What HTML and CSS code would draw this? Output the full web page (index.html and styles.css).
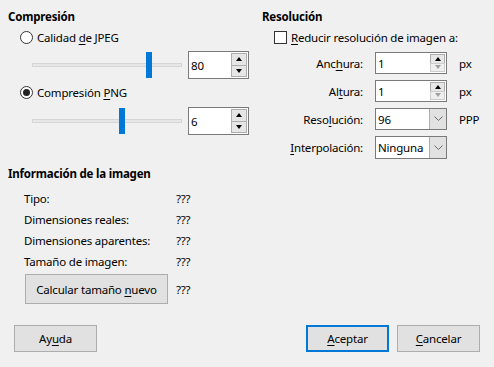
FILE: index.html
```html
<!DOCTYPE html>
<html lang="es">
<head>
  <meta charset="UTF-8">
  <title>Comprimir imagen</title>
  <link rel="stylesheet" href="styles.css">
</head>
<body>
  <div class="dialog">
    <div class="top">
      <section class="col-left">
        <h3 class="heading">Compresión</h3>
        <label class="option opt-jpeg"><span class="radio"></span><span>Calidad <u>d</u>e JPEG</span></label>
        <div class="slider-row row-jpeg">
          <div class="slider">
            <div class="track"></div>
            <div class="thumb" style="left: 114px"></div>
          </div>
          <div class="spin">
            <span class="value">80</span>
            <span class="spin-btns"><span class="sbtn up"></span><span class="sbtn down"></span></span>
          </div>
        </div>
        <label class="option opt-png"><span class="radio checked"></span><span>Compresión <u>P</u>NG</span></label>
        <div class="slider-row row-png">
          <div class="slider">
            <div class="track"></div>
            <div class="thumb" style="left: 87px"></div>
          </div>
          <div class="spin">
            <span class="value">6</span>
            <span class="spin-btns"><span class="sbtn up"></span><span class="sbtn down"></span></span>
          </div>
        </div>
      </section>

      <section class="col-right">
        <h3 class="heading">Resolución</h3>
        <label class="option opt-reduce"><span class="check"></span><span><u>R</u>educir resolución de imagen a:</span></label>
        <div class="fields">
          <div class="field-row">
            <span class="flabel">Anc<u>h</u>ura:</span>
            <div class="spin small">
              <span class="value">1</span>
              <span class="spin-btns"><span class="sbtn up"></span><span class="sbtn down off"></span></span>
            </div>
            <span class="unit">px</span>
          </div>
          <div class="field-row">
            <span class="flabel">Al<u>t</u>ura:</span>
            <div class="spin small">
              <span class="value">1</span>
              <span class="spin-btns"><span class="sbtn up"></span><span class="sbtn down off"></span></span>
            </div>
            <span class="unit">px</span>
          </div>
          <div class="field-row">
            <span class="flabel">Reso<u>l</u>ución:</span>
            <div class="combo">
              <span class="value">96</span>
              <span class="drop"><svg width="9" height="6" viewBox="0 0 9 6"><polyline points="0.5,0.5 4.5,4.5 8.5,0.5" fill="none" stroke="#6d6d6d" stroke-width="1"/></svg></span>
            </div>
            <span class="unit">PPP</span>
          </div>
          <div class="field-row last">
            <span class="flabel"><u>I</u>nterpolación:</span>
            <div class="combo">
              <span class="value">Ninguna</span>
              <span class="drop"><svg width="9" height="6" viewBox="0 0 9 6"><polyline points="0.5,0.5 4.5,4.5 8.5,0.5" fill="none" stroke="#6d6d6d" stroke-width="1"/></svg></span>
            </div>
          </div>
        </div>
      </section>
    </div>

    <section class="info">
      <h3 class="heading">Información de la imagen</h3>
      <div class="info-grid">
        <span>Tipo:</span><span>???</span>
        <span>Dimensiones reales:</span><span>???</span>
        <span>Dimensiones aparentes:</span><span>???</span>
        <span>Tamaño de imagen:</span><span>???</span>
        <span class="calc-cell"><button class="btn calc">Calcular tamaño <u>n</u>uevo</button></span><span class="calc-val">???</span>
      </div>
    </section>

    <div class="footer">
      <button class="btn">Ay<u>u</u>da</button>
      <span class="spacer"></span>
      <button class="btn default"><u>A</u>ceptar</button>
      <button class="btn"><u>C</u>ancelar</button>
    </div>
  </div>
</body>
</html>
```

FILE: styles.css
```css
body {
  margin: 0;
  background: #f0f0f0;
  font-family: "Noto Sans", "Open Sans", sans-serif;
  font-size: 11.5px;
  letter-spacing: -0.2px;
  color: #000;
}
u {
  text-decoration: underline;
  text-underline-offset: 2px;
}
.dialog {
  width: 494px;
  height: 367px;
  display: flex;
  flex-direction: column;
  box-sizing: border-box;
}
.top {
  display: flex;
  padding-top: 9px;
}
.heading {
  margin: 0;
  font-size: 11.5px;
  font-weight: bold;
  line-height: 16px;
}
.col-left {
  width: 262px;
  padding-left: 8px;
  box-sizing: border-box;
}
.col-right {
  flex: 1;
}
.option {
  display: flex;
  align-items: center;
  height: 16px;
  margin-left: 12px;
  gap: 4px;
  white-space: nowrap;
}
.opt-jpeg { margin-top: 4px; }
.opt-png { margin-top: 5px; }
.opt-reduce { margin-top: 4px; }
.radio {
  width: 13px;
  height: 13px;
  box-sizing: border-box;
  border: 1px solid #333;
  border-radius: 50%;
  background: #fff;
  display: flex;
  align-items: center;
  justify-content: center;
}
.radio.checked::after {
  content: "";
  width: 7px;
  height: 7px;
  border-radius: 50%;
  background: #222;
}
.check {
  width: 13px;
  height: 13px;
  box-sizing: border-box;
  border: 1px solid #333;
  background: #fff;
}
.slider-row {
  display: flex;
  align-items: center;
  height: 28px;
  margin-left: 24px;
  gap: 6px;
}
.row-jpeg { margin-top: 6px; }
.row-png { margin-top: 7px; }
.slider {
  position: relative;
  width: 150px;
  height: 28px;
}
.track {
  position: absolute;
  left: 0;
  right: 0;
  top: 12px;
  height: 4px;
  box-sizing: border-box;
  background: #e7e7e7;
  border: 1px solid #d6d6d6;
}
.thumb {
  position: absolute;
  top: 1px;
  width: 6px;
  height: 26px;
  background: #0078d7;
}
.spin {
  display: flex;
  align-items: stretch;
  width: 61px;
  height: 28px;
  box-sizing: border-box;
  border: 1px solid #7a7a7a;
  background: #fff;
  padding: 1px 1px 1px 0;
}
.spin .value,
.combo .value {
  flex: 1;
  display: flex;
  align-items: center;
  padding-left: 2px;
}
.spin-btns {
  display: flex;
  flex-direction: column;
  width: 16px;
}
.sbtn {
  flex: 1;
  display: flex;
  align-items: center;
  justify-content: center;
  background: #e6e6e6;
  border: 1px solid #adadad;
}
.sbtn.up { border-bottom-width: 0; }
.sbtn::after {
  content: "";
  border-left: 3px solid transparent;
  border-right: 3px solid transparent;
}
.sbtn.up::after { border-bottom: 4px solid #000; }
.sbtn.down::after { border-top: 4px solid #000; }
.sbtn.down.off::after { border-top-color: #a0a0a0; }
.sbtn.off { background: #efefef; border-color: #cdcdcd; }
.spin.small {
  width: 72px;
  height: 22px;
}
.spin.small .spin-btns { width: 15px; }
.fields {
  margin-top: 7px;
}
.field-row {
  display: flex;
  align-items: center;
  height: 22px;
  margin-bottom: 6px;
}
.field-row.last {
  margin-top: 2px;
  margin-bottom: 0;
  height: 23px;
}
.flabel {
  width: 101px;
  padding-right: 12px;
  text-align: right;
  white-space: nowrap;
}
.unit {
  padding-left: 12px;
}
.combo {
  display: flex;
  width: 72px;
  height: 100%;
  box-sizing: border-box;
  border: 1px solid #7a7a7a;
  background: #fff;
}
.drop {
  width: 16px;
  display: flex;
  align-items: center;
  justify-content: center;
  background: #e1e1e1;
  border-left: 1px solid #adadad;
}
.info {
  padding-left: 8px;
  margin-top: 7px;
}
.info-grid {
  display: grid;
  grid-template-columns: 152px auto;
  grid-auto-rows: 21px;
  align-items: center;
  margin: 6px 0 0 16px;
}
.info-grid .calc-cell,
.info-grid .calc-val {
  margin-top: 2px;
  height: 30px;
  display: flex;
  align-items: center;
  align-self: start;
}
.btn {
  font: inherit;
  letter-spacing: inherit;
  color: #000;
  background: #e1e1e1;
  border: 1px solid #adadad;
  padding: 0;
  width: 83px;
  height: 27px;
  box-sizing: border-box;
}
.btn.calc {
  width: 143px;
  height: 30px;
  margin-left: 1px;
}
.btn.default {
  border: 2px solid #0078d7;
}
.footer {
  margin-top: auto;
  display: flex;
  gap: 8px;
  padding: 0 14px 15px;
}
.spacer {
  flex: 1;
}
```
